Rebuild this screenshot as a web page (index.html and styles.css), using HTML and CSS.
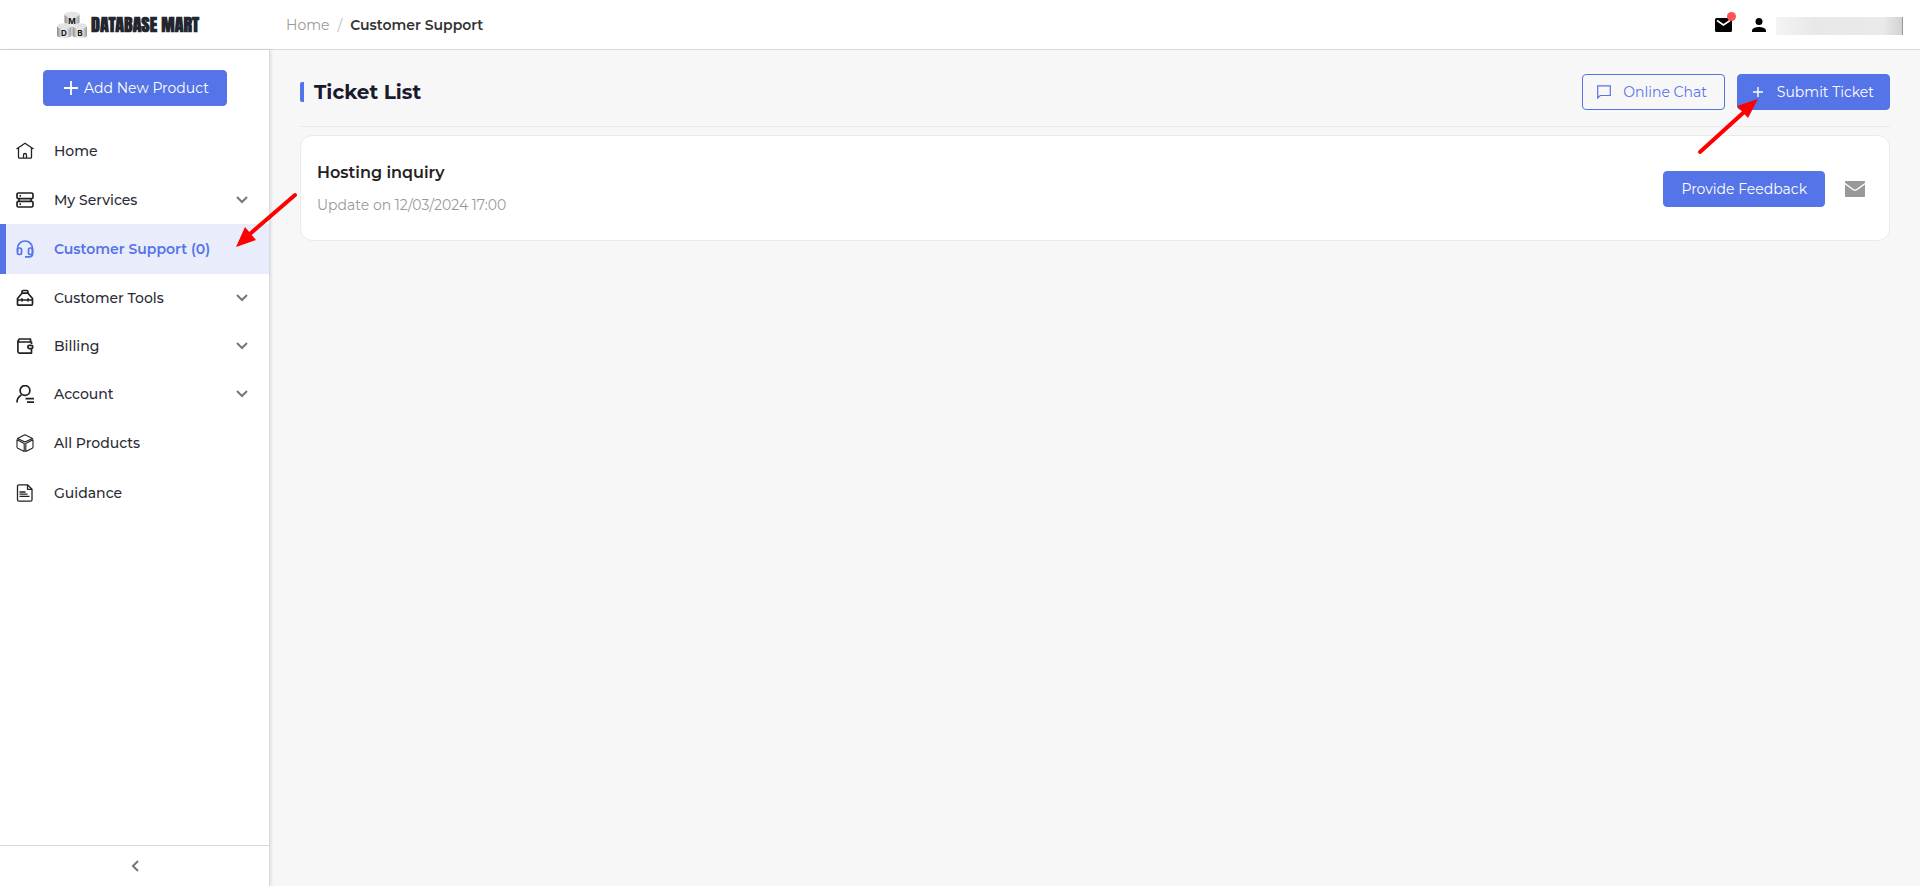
FILE: index.html
```
<!DOCTYPE html>
<html lang="en">
<head>
  <meta charset="UTF-8" />
  <meta name="viewport" content="width=device-width, initial-scale=1" />
  <title>Customer Support - Database Mart</title>
  <link rel="stylesheet" href="styles.css">
</head>
<body>
  <header class="topbar">
    <a href="#" class="logo">
      <svg class="logo-mark" width="30" height="28" viewBox="0 0 30 28" aria-hidden="true">
        <defs>
          <linearGradient id="cyl">
            <stop offset="0" stop-color="#888" />
            <stop offset="0.35" stop-color="#eee" />
            <stop offset="0.7" stop-color="#ddd" />
            <stop offset="1" stop-color="#999" />
          </linearGradient>
        </defs>
        <path d="M7.500 3.500v8c0 3.300 15 3.300 15 0v-8z" fill="url(#cyl)" />
        <ellipse cx="15" cy="3.500" rx="7.500" ry="2.800" fill="#e4e4e4" />
        <path d="M0 15.500v9c0 3.300 14.500 3.300 14.500 0v-9z" fill="url(#cyl)" />
        <ellipse cx="7.250" cy="15" rx="7.250" ry="2.800" fill="#e4e4e4" />
        <path d="M15.500 15.500v9c0 3.300 14.500 3.300 14.500 0v-9z" fill="url(#cyl)" />
        <ellipse cx="22.750" cy="15" rx="7.250" ry="2.800" fill="#e4e4e4" />
        <text x="15" y="13" class="logo-letter">M</text>
        <text x="7" y="25" class="logo-letter">D</text>
        <text x="23" y="25" class="logo-letter">B</text>
      </svg>
      <span class="logo-name">DATABASE MART</span>
    </a>
    <nav class="breadcrumb" aria-label="Breadcrumb">
      <a href="#">Home</a>
      <span class="sep">/</span>
      <span class="current">Customer Support</span>
    </nav>
    <div class="user-area">
      <button class="icon-btn mail-btn" aria-label="Messages">
        <svg width="17" height="14" viewBox="0 0 17 14">
          <rect width="17" height="14" rx="1.500" fill="#000" />
          <path d="M2 2.500l6.500 4.500L15 2.500" fill="none" stroke="#fff" stroke-width="1.600" />
        </svg>
        <span class="dot"></span>
      </button>
      <button class="icon-btn" aria-label="Profile">
        <svg width="14" height="14" viewBox="0 0 14 14">
          <circle cx="7" cy="3.500" r="3.500" />
          <path d="M0 14v-1.500C0 10 4.500 8.900 7 8.900s7 1.100 7 3.600V14z" />
        </svg>
      </button>
      <span class="user-name"></span>
    </div>
  </header>

  <div class="layout">
    <aside class="sidebar">
      <button class="btn btn-primary add-btn">
        <svg width="14" height="14" viewBox="0 0 14 14" fill="none" stroke="currentColor" stroke-width="1.800"><path d="M7 0v14M0 7h14" /></svg>
        Add New Product
      </button>

      <nav class="menu" aria-label="Main">
        <a href="#" class="menu-item">
          <svg class="menu-icon" viewBox="0 0 18 18"><path d="M.5 7L9 1.200 17.500 7M2.500 6v9.200c0 .7.300 1 1 1h11c.7 0 1-.3 1-1V6M7.500 16v-3a1.500 1.500 0 0 1 3 0v3" /></svg>
          <span>Home</span>
        </a>
        <a href="#" class="menu-item has-sub">
          <svg class="menu-icon bold" viewBox="0 0 18 18"><rect x="1" y="2" width="16" height="5.700" rx="1.500" /><rect x="1" y="10.300" width="16" height="5.700" rx="1.500" /><path d="M3.500 4.800H5M3.500 13.200H5M3 7.900v2.200M15 7.900v2.200" /></svg>
          <span>My Services</span>
          <svg class="chevron" viewBox="0 0 12 8"><path d="M1 1l5 5 5-5" /></svg>
        </a>
        <a href="#" class="menu-item active">
          <svg class="menu-icon bold" viewBox="0 0 18 18"><path d="M1.500 11.500V8.500a7.500 7.500 0 0 1 15 0v5.500c0 2-1.500 2.900-3.500 2.900H9" /><rect x="1.500" y="8" width="4" height="6.500" rx="1.800" /><rect x="12.500" y="8" width="4" height="6.500" rx="1.800" /></svg>
          <span>Customer Support (0)</span>
        </a>
        <a href="#" class="menu-item has-sub">
          <svg class="menu-icon bold" viewBox="0 0 18 18"><path d="M1.500 15V9.500L6 4.200h6l4.500 5.300V15c0 .8-.3 1.200-1 1.200h-13c-.7 0-1-.4-1-1.200zM6 4V2.800C6 1.800 6.500 1.500 7.200 1.500h3.600c.7 0 1.200.3 1.200 1.300V4M2 11h14M6 9.300v3.200M12 9.300v3.200" /></svg>
          <span>Customer Tools</span>
          <svg class="chevron" viewBox="0 0 12 8"><path d="M1 1l5 5 5-5" /></svg>
        </a>
        <a href="#" class="menu-item has-sub">
          <svg class="menu-icon bold" viewBox="0 0 18 18"><path d="M15.500 7V5H3.500a1.600 1.600 0 0 1 0-3h11v3M1.900 3.500v11c0 1 .6 1.600 1.600 1.600h12V12" /><rect x="11.800" y="8.300" width="5" height="3.400" rx="1.600" /></svg>
          <span>Billing</span>
          <svg class="chevron" viewBox="0 0 12 8"><path d="M1 1l5 5 5-5" /></svg>
        </a>
        <a href="#" class="menu-item has-sub">
          <svg class="menu-icon bold" viewBox="0 0 18 18"><circle cx="9" cy="5.500" r="4.900" /><path d="M1 17.500c0-3.500 1.500-6 4.500-7.500M9.500 13.700H18M11 17.200h7" /></svg>
          <span>Account</span>
          <svg class="chevron" viewBox="0 0 12 8"><path d="M1 1l5 5 5-5" /></svg>
        </a>
        <a href="#" class="menu-item">
          <svg class="menu-icon thin" viewBox="0 0 18 18"><path d="M9 .8l7.500 3.600L9 8 1.500 4.400zM1 5.800l7.200 3.600v8L1.800 14.300c-.5-.3-.8-.6-.8-1.200zM17 5.800L9.800 9.400v8l6.400-3.100c.5-.3.800-.6.800-1.200z" /></svg>
          <span>All Products</span>
        </a>
        <a href="#" class="menu-item">
          <svg class="menu-icon" viewBox="0 0 18 18"><path d="M11.500.8H3A1.500 1.500 0 0 0 1.500 2.300v13.400A1.500 1.500 0 0 0 3 17.200h11.500a1.500 1.500 0 0 0 1.500-1.500V5.300zV5.300H16M3.500 8h6M3.500 10.200h8M3.500 12.400h10" /></svg>
          <span>Guidance</span>
        </a>
      </nav>

      <button class="collapse-btn" aria-label="Collapse menu">
        <svg width="8" height="12" viewBox="0 0 8 12"><path d="M7 1L2 6l5 5" /></svg>
      </button>
    </aside>

    <main class="content">
      <div class="page-head">
        <h1>Ticket List</h1>
        <div class="actions">
          <button class="btn btn-outline">
            <svg width="14" height="14" viewBox="0 0 14 14" fill="none" stroke="currentColor" stroke-width="1.200"><path d="M.7 13V.8h12.600v9.700H3.200z" /></svg>
            Online Chat
          </button>
          <button class="btn btn-primary submit-btn">
            <svg width="10" height="10" viewBox="0 0 10 10" fill="none" stroke="currentColor" stroke-width="1.400"><path d="M5 0v10M0 5h10" /></svg>
            Submit Ticket
          </button>
        </div>
        <svg class="arrow arrow-submit" viewBox="0 0 62 56"><path d="M3 53L46 14" /><polygon points="61,0 40,7 51,19" /></svg>
      </div>

      <section class="ticket">
        <div class="ticket-info">
          <h2>Hosting inquiry</h2>
          <p>Update on 12/03/2024 17:00</p>
        </div>
        <button class="btn btn-primary">Provide Feedback</button>
        <button class="icon-btn" aria-label="Mark as read">
          <svg width="20" height="16" viewBox="0 0 20 16" fill="#999"><path d="M1 0h18c.6 0 1 .4 1 1v.8L11.500 8c-1 .7-2 .7-3 0L0 1.800V1c0-.6.400-1 1-1z" /><path d="M0 3.500L8 9.300c1.300.9 2.700.9 4 0l8-5.800V15c0 .6-.4 1-1 1H1c-.6 0-1-.4-1-1z" /></svg>
        </button>
      </section>
    </main>
    <svg class="arrow arrow-menu" viewBox="0 0 62 56"><path d="M59 3L15 41" /><polygon points="0,55 9,35 20,48" /></svg>
  </div>
</body>
</html>
```

FILE: styles.css
```
* {
  box-sizing: border-box;
}

body {
  margin: 0;
  min-height: 100vh;
  display: flex;
  flex-direction: column;
  font-family: Montserrat, Inter, sans-serif;
  font-size: 14px;
  color: #2b2b36;
  background: #f7f7f7;
}

a {
  color: inherit;
  text-decoration: none;
}

button {
  font: inherit;
  cursor: pointer;
}

svg {
  flex: none;
}

/* top bar */
.topbar {
  display: flex;
  align-items: center;
  height: 50px;
  padding-right: 17px;
  background: #fff;
  border-bottom: 1px solid #d9d9d9;
}

.logo {
  display: flex;
  align-items: center;
  gap: 4px;
  width: 286px;
  padding-left: 57px;
}

.logo-letter {
  font: bold 8px Inter, sans-serif;
  text-anchor: middle;
  fill: #111;
}

.logo-name {
  font-family: Anton, "Liberation Sans", sans-serif;
  font-size: 18px;
  font-weight: bold;
  line-height: 24px;
  white-space: nowrap;
  color: #23262f;
}

.breadcrumb {
  display: flex;
  gap: 8px;
  color: #999;
}

.breadcrumb .sep {
  color: #bbb;
}

.breadcrumb .current {
  font-weight: 600;
  color: #333;
}

.user-area {
  display: flex;
  align-items: center;
  gap: 20px;
  margin-left: auto;
}

.icon-btn {
  display: flex;
  position: relative;
  padding: 0;
  border: 0;
  background: none;
}

.dot {
  position: absolute;
  top: -6px;
  right: -4px;
  width: 9px;
  height: 9px;
  border-radius: 50%;
  background: #ff5252;
}

.user-name {
  width: 127px;
  height: 18px;
  margin: 2px 0 0 -10px;
  border-right: 1px solid #999;
  background: linear-gradient(90deg, #f4f4f4, #e8e8e8 30%, #eaeaea 85%, #d2d2d2);
}

/* layout */
.layout {
  display: flex;
  flex: 1;
  position: relative;
}

.sidebar {
  display: flex;
  flex-direction: column;
  width: 270px;
  padding-top: 20px;
  background: #fff;
  border-right: 1px solid #dcdcdc;
  box-shadow: 1px 0 3px rgba(0, 0, 0, 0.12);
}

.btn {
  display: flex;
  align-items: center;
  justify-content: center;
  height: 36px;
  padding: 0 17px;
  border: 1px solid #5574e7;
  border-radius: 4px;
  white-space: nowrap;
}

.btn-primary {
  color: #fff;
  background: #5574e7;
}

.btn-outline {
  gap: 12px;
  padding: 0 17px 0 14px;
  color: #5574e7;
  background: transparent;
}

.add-btn {
  gap: 6px;
  width: 184px;
  padding: 0 14px 0 18px;
  margin: 0 auto 20px;
}

.submit-btn {
  gap: 14px;
  padding: 0 15px;
}

.menu-item {
  display: flex;
  align-items: center;
  height: 50px;
  padding: 0 21px 0 16px;
  font-weight: 500;
  line-height: 20px;
}

.menu-item.has-sub {
  height: 48px;
}

.menu-item.active {
  padding-left: 10px;
  border-left: 6px solid #5574e7;
  font-weight: 600;
  color: #5574e7;
  background: #e8ecfb;
}

.menu-icon {
  width: 18px;
  height: 18px;
  margin-right: 20px;
  fill: none;
  stroke: #222;
  stroke-width: 1.3;
  stroke-linejoin: round;
}

.menu-icon.bold {
  stroke-width: 1.7;
}

.menu-icon.thin {
  stroke-width: 1.1;
}

.active .menu-icon {
  stroke: #5574e7;
}

.chevron {
  width: 12px;
  height: 8px;
  margin-left: auto;
}

.chevron,
.collapse-btn svg {
  fill: none;
  stroke: #777;
  stroke-width: 2;
}

.collapse-btn {
  display: flex;
  align-items: center;
  justify-content: center;
  height: 41px;
  margin-top: auto;
  border: 0;
  border-top: 1px solid #d9d9d9;
  background: #fff;
}

/* content */
.content {
  flex: 1;
  padding: 24px 30px;
}

.page-head {
  display: flex;
  align-items: center;
  justify-content: space-between;
  position: relative;
  padding-bottom: 16px;
  margin-bottom: 8px;
  border-bottom: 1px solid #ebebeb;
}

h1 {
  margin: 0;
  padding-left: 10px;
  border-left: 4px solid #5574e7;
  border-radius: 2px;
  font-size: 20px;
  line-height: 20px;
  color: #1a1a2e;
}

.actions {
  display: flex;
  gap: 12px;
}

.ticket {
  display: flex;
  align-items: center;
  gap: 20px;
  padding: 25px 24px 23px 16px;
  border: 1px solid #ebebeb;
  border-radius: 12px;
  background: #fff;
}

.ticket-info {
  flex: 1;
}

h2 {
  margin: 0 0 8px;
  font-size: 16px;
  font-weight: 600;
  line-height: 24px;
  color: #222;
}

.ticket p {
  margin: 0;
  line-height: 24px;
  color: #999;
}

/* pointer arrows over the page */
.arrow {
  position: absolute;
  width: 62px;
  height: 56px;
  fill: #f00;
  pointer-events: none;
}

.arrow path {
  fill: none;
  stroke: #f00;
  stroke-width: 4;
  stroke-linecap: round;
}

.arrow-menu {
  top: 142px;
  left: 236px;
}

.arrow-submit {
  top: 25px;
  right: 131px;
}
```
